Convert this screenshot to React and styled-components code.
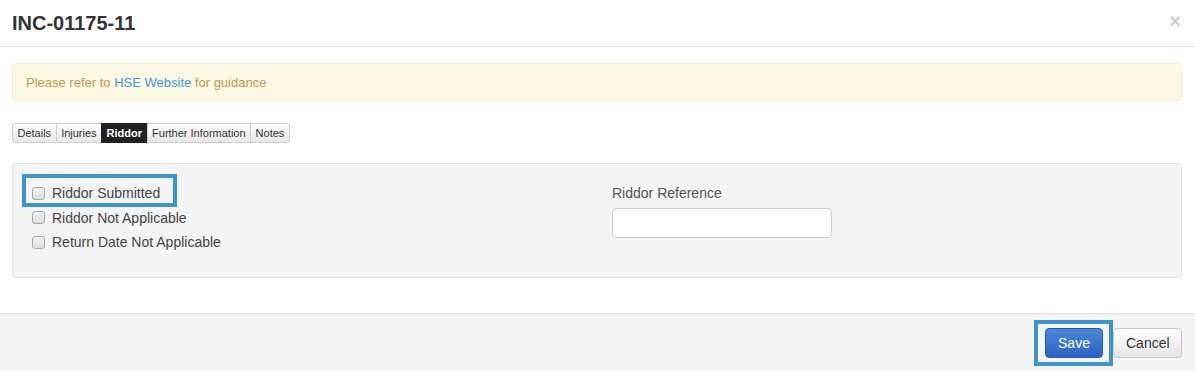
import React from 'react'
import styled, { createGlobalStyle } from 'styled-components'

const GlobalStyle = createGlobalStyle`
    html, body {
        margin: 0;
        padding: 0;
        background: #fff;
        font-family: "Liberation Sans", Arial, sans-serif;
        color: #333;
    }
`;

const tabs = ['Details', 'Injuries', 'Riddor', 'Further Information', 'Notes'];
const options = ['Riddor Submitted', 'Riddor Not Applicable', 'Return Date Not Applicable'];

const App = () => {
    return (
        <Modal>
            <GlobalStyle />
            <Header>
                <Title>INC-01175-11</Title>
                <Close>×</Close>
            </Header>

            <Body>
                <Alert>
                    Please refer to <Link>HSE Website</Link> for guidance
                </Alert>

                <TabBar>
                    {tabs.map(tab => (
                        <Tab key={tab} active={tab === 'Riddor'}>{tab}</Tab>
                    ))}
                </TabBar>

                <Well>
                    <CheckList>
                        {options.map((opt, i) => (
                            <CheckRow key={opt}>
                                <Check type="checkbox" />
                                <CheckLabel>{opt}</CheckLabel>
                                {i === 0 && <Highlight />}
                            </CheckRow>
                        ))}
                    </CheckList>

                    <Field>
                        <FieldLabel>Riddor Reference</FieldLabel>
                        <Input type="text" />
                    </Field>
                </Well>
            </Body>

            <Footer>
                <SaveWrap>
                    <SaveButton>Save</SaveButton>
                    <Highlight wide />
                </SaveWrap>
                <CancelButton>Cancel</CancelButton>
            </Footer>
        </Modal>
    )
}

export default App


const Modal = styled.div`
    width: 1195px;
    height: 371px;
    overflow: hidden;
    display: flex;
    flex-direction: column;
`;

const Header = styled.div`
    height: 46px;
    border-bottom: 1px solid #e5e5e5;
    padding: 0 14px 0 12px;
    display: flex;
    align-items: center;
    justify-content: space-between;
`;

const Title = styled.h4`
    margin: 0;
    font-size: 20px;
    font-weight: 700;
    color: #333;
`;

const Close = styled.span`
    font-size: 20px;
    font-weight: 700;
    color: #000;
    opacity: 0.2;
    line-height: 1;
    margin-top: -4px;
`;

const Body = styled.div`
    padding: 16px 13px 35px 12px;
`;

const Alert = styled.div`
    height: 38px;
    box-sizing: border-box;
    padding: 0 13px;
    display: flex;
    align-items: center;
    white-space: pre;
    background: #fcf8e3;
    border: 1px solid #faebcc;
    border-radius: 4px;
    color: #c09853;
    font-size: 13px;
`;

const Link = styled.span`
    color: #3a9ad9;
`;

const TabBar = styled.div`
    display: flex;
    margin: 22px 0 20px;
`;

const Tab = styled.div`
    height: 20px;
    box-sizing: border-box;
    padding: 0 4.5px;
    display: flex;
    align-items: center;
    font-size: 11px;
    border: 1px solid ${p => (p.active ? '#222' : '#ccc')};
    margin-left: -1px;
    background: ${p => (p.active ? '#222' : 'linear-gradient(to bottom, #fff, #e6e6e6)')};
    color: ${p => (p.active ? '#fff' : '#333')};
    font-weight: ${p => (p.active ? 700 : 400)};

    &:first-child {
        margin-left: 0;
        border-radius: 3px 0 0 3px;
    }

    &:last-child {
        border-radius: 0 3px 3px 0;
    }
`;

const Well = styled.div`
    display: grid;
    grid-template-columns: 1fr 1fr;
    column-gap: 30px;
    padding: 19px 19px 25px;
    background: #f4f4f4;
    border: 1px solid #e3e3e3;
    border-radius: 4px;
`;

const CheckList = styled.div`
    display: flex;
    flex-direction: column;
    gap: 4.5px;
`;

const CheckRow = styled.label`
    position: relative;
    height: 20px;
    display: flex;
    align-items: center;
    gap: 7px;
`;

const Check = styled.input`
    appearance: none;
    margin: 0;
    width: 13px;
    height: 13px;
    border: 1px solid #a8a8a8;
    border-radius: 3px;
    background: linear-gradient(to bottom, #f2f2f2, #dedede);
`;

const CheckLabel = styled.span`
    font-size: 14px;
    color: #444;
`;

const Highlight = styled.span`
    position: absolute;
    top: ${p => (p.wide ? '-8px' : '-9px')};
    bottom: ${p => (p.wide ? '-8px' : '-4px')};
    left: ${p => (p.wide ? '-11px' : '-10px')};
    right: ${p => (p.wide ? '-10px' : 'auto')};
    width: ${p => (p.wide ? 'auto' : '155px')};
    border: 4px solid #3d94cc;
    box-sizing: border-box;
    pointer-events: none;
`;

const Field = styled.div`
    display: flex;
    flex-direction: column;
    gap: 5px;
`;

const FieldLabel = styled.span`
    font-size: 14px;
    line-height: 20px;
    color: #555;
`;

const Input = styled.input`
    width: 220px;
    height: 30px;
    box-sizing: border-box;
    border: 1px solid #ccc;
    border-radius: 4px;
    background: #fff;
    outline: none;
`;

const Footer = styled.div`
    flex: 1;
    border-top: 1px solid #ddd;
    background: #f4f4f4;
    padding: 14px 13px 0;
    display: flex;
    justify-content: flex-end;
    align-items: flex-start;
    gap: 10px;
`;

const SaveWrap = styled.div`
    position: relative;
    display: flex;
`;

const BaseButton = styled.button`
    height: 30px;
    border-radius: 4px;
    font-family: "Liberation Sans", Arial, sans-serif;
    font-size: 14px;
    padding: 0 12px;
    cursor: pointer;
`;

const SaveButton = styled(BaseButton)`
    width: 58px;
    color: #fff;
    background: linear-gradient(to bottom, #4a88d8, #2d62c2);
    border: 1px solid #2a5cae;
`;

const CancelButton = styled(BaseButton)`
    width: 69px;
    color: #333;
    background: linear-gradient(to bottom, #fff, #e4e4e4);
    border: 1px solid #c8c8c8;
`;
